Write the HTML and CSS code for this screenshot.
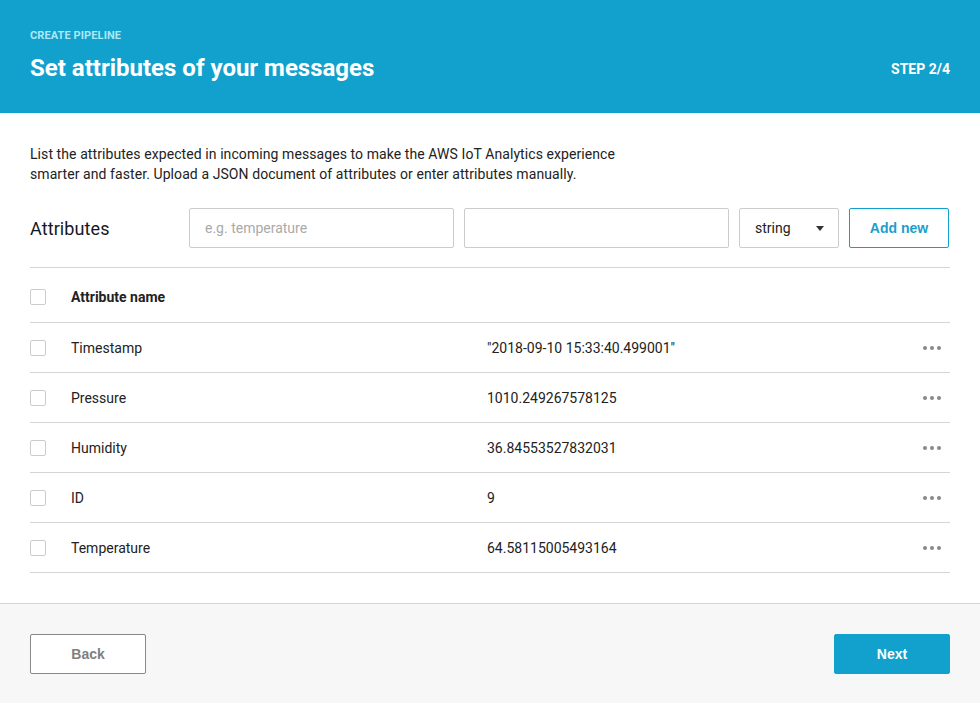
FILE: index.html
```html
<!DOCTYPE html>
<html>
<head>
<meta charset="utf-8">
<link rel="stylesheet" href="styles.css">
</head>
<body>
<div class="page">
  <header class="hero">
    <div class="hero-left">
      <div class="eyebrow">CREATE PIPELINE</div>
      <h1 class="title">Set attributes of your messages</h1>
    </div>
    <div class="step">STEP 2/4</div>
  </header>
  <main class="content">
    <p class="desc">List the attributes expected in incoming messages to make the AWS IoT Analytics experience smarter and faster. Upload a JSON document of attributes or enter attributes manually.</p>
    <div class="attr-form">
      <div class="attr-label">Attributes</div>
      <input class="field" type="text" placeholder="e.g. temperature">
      <input class="field" type="text">
      <div class="select"><span>string</span><span class="caret"></span></div>
      <button class="btn-add">Add new</button>
    </div>
    <div class="table">
      <div class="row head">
        <span class="cb"></span>
        <span class="name">Attribute name</span>
      </div>
      <div class="row">
        <span class="cb"></span><span class="name">Timestamp</span><span class="val">"2018-09-10 15:33:40.499001"</span><span class="more"><i></i><i></i><i></i></span>
      </div>
      <div class="row">
        <span class="cb"></span><span class="name">Pressure</span><span class="val">1010.249267578125</span><span class="more"><i></i><i></i><i></i></span>
      </div>
      <div class="row">
        <span class="cb"></span><span class="name">Humidity</span><span class="val">36.84553527832031</span><span class="more"><i></i><i></i><i></i></span>
      </div>
      <div class="row">
        <span class="cb"></span><span class="name">ID</span><span class="val">9</span><span class="more"><i></i><i></i><i></i></span>
      </div>
      <div class="row">
        <span class="cb"></span><span class="name">Temperature</span><span class="val">64.58115005493164</span><span class="more"><i></i><i></i><i></i></span>
      </div>
    </div>
  </main>
  <footer class="footer">
    <button class="btn-back">Back</button>
    <button class="btn-next">Next</button>
  </footer>
</div>
</body>
</html>
```

FILE: styles.css
```css
* { box-sizing: border-box; }
html, body { margin: 0; padding: 0; background: #fff; }
body { font-family: Roboto, "Open Sans", sans-serif; color: #222; }
.page { width: 980px; height: 703px; display: flex; flex-direction: column; }

.hero {
  height: 113px;
  background: #12a1cd;
  padding: 0 30px;
  display: flex;
  justify-content: space-between;
  align-items: flex-start;
}
.hero-left { display: flex; flex-direction: column; }
.eyebrow {
  margin-top: 30px;
  font-size: 11px;
  font-weight: 700;
  line-height: 12px;
  color: #a9e9f7;
  letter-spacing: 0.1px;
}
.title {
  margin: 12px 0 0;
  font-size: 24px;
  line-height: 28px;
  font-weight: 700;
  color: #fff;
  letter-spacing: 0;
}
.step {
  margin-top: 61px;
  font-size: 14px;
  font-weight: 700;
  line-height: 16px;
  color: #fff;
}

.content { padding: 0 30px; flex: 1; }
.desc {
  margin: 31px 0 0;
  width: 620px;
  font-size: 14px;
  line-height: 20px;
  letter-spacing: 0.08px;
  color: #222;
}
.attr-form {
  margin-top: 24px;
  display: flex;
  align-items: center;
  padding-bottom: 19px;
  border-bottom: 1px solid #d5d5d5;
}
.attr-label { width: 159px; font-size: 18px; color: #16191f; letter-spacing: 0.1px; }
.field {
  width: 265px;
  height: 40px;
  margin-right: 10px;
  border: 1px solid #ccc;
  border-radius: 2px;
  padding: 0 15px;
  font-family: Roboto, "Open Sans", sans-serif;
  font-size: 14px;
  outline: none;
}
.field::placeholder { color: #aaa; }
.select {
  width: 100px;
  height: 40px;
  margin-right: 10px;
  border: 1px solid #ccc;
  border-radius: 2px;
  padding: 0 14px 0 15px;
  display: flex;
  align-items: center;
  justify-content: space-between;
  font-size: 14px;
  color: #222;
}
.caret {
  width: 0; height: 0;
  border-left: 4px solid transparent;
  border-right: 4px solid transparent;
  border-top: 5px solid #333;
}
.btn-add {
  width: 100px;
  height: 40px;
  border: 1px solid #12a1cd;
  border-radius: 2px;
  background: #fff;
  color: #1a9fca;
  font-family: "Liberation Sans", Arial, sans-serif;
  font-weight: 700;
  font-size: 14px;
}

.table { display: flex; flex-direction: column; }
.row {
  height: 50px;
  display: flex;
  align-items: center;
  border-bottom: 1px solid #d5d5d5;
  font-size: 14px;
  color: #222;
}
.row.head { height: 55px; padding-top: 3px; }
.row.head .name { font-weight: 700; }
.cb {
  width: 16px; height: 16px;
  border: 1px solid #ccc;
  border-radius: 2px;
  margin-right: 25px;
  flex: none;
}
.name { width: 416px; }
.val { flex: 1; }
.more { display: flex; gap: 3px; margin-right: 9px; }
.more i { width: 4px; height: 4px; border-radius: 50%; background: #888; display: block; }

.footer {
  height: 100px;
  background: #f7f7f7;
  border-top: 1px solid #d5d5d5;
  padding: 30px 30px 0;
  display: flex;
  justify-content: space-between;
  align-items: flex-start;
}
.btn-back, .btn-next {
  width: 116px;
  height: 40px;
  border-radius: 2px;
  font-family: "Liberation Sans", Arial, sans-serif;
  font-weight: 700;
  font-size: 14px;
}
.btn-back { background: #fff; border: 1px solid #888; color: #7f7f7f; }
.btn-next { background: #12a1cd; border: 1px solid #12a1cd; color: #fff; }
```
